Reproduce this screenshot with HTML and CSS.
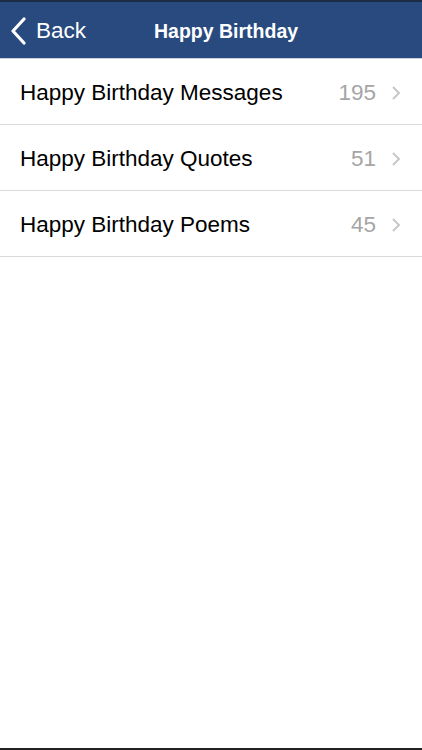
FILE: index.html
```html
<!DOCTYPE html>
<html>
<head>
<meta charset="utf-8">
<link rel="stylesheet" href="styles.css">
</head>
<body>
<div class="screen">
  <header class="navbar">
    <div class="back">
      <svg class="back-chev" width="18" height="28" viewBox="0 0 18 28"><path d="M14 2 L3 14 L14 26" fill="none" stroke="#fff" stroke-width="3.2" stroke-linecap="round" stroke-linejoin="round"/></svg>
      <span class="back-label">Back</span>
    </div>
    <div class="title">Happy Birthday</div>
  </header>
  <ul class="list">
    <li class="row"><span class="label">Happy Birthday Messages</span><span class="count">195</span><svg class="chev" width="10" height="16" viewBox="0 0 10 16"><path d="M2 2 L8 8 L2 14" fill="none" stroke="#c7c7cc" stroke-width="2"/></svg></li>
    <li class="row"><span class="label">Happy Birthday Quotes</span><span class="count">51</span><svg class="chev" width="10" height="16" viewBox="0 0 10 16"><path d="M2 2 L8 8 L2 14" fill="none" stroke="#c7c7cc" stroke-width="2"/></svg></li>
    <li class="row"><span class="label">Happy Birthday Poems</span><span class="count">45</span><svg class="chev" width="10" height="16" viewBox="0 0 10 16"><path d="M2 2 L8 8 L2 14" fill="none" stroke="#c7c7cc" stroke-width="2"/></svg></li>
  </ul>
  <div class="filler"></div>
</div>
</body>
</html>
```
FILE: styles.css
```css
html, body { margin: 0; padding: 0; }
body { font-family: "Liberation Sans", Arial, sans-serif; background: #fff; }
.screen { width: 422px; height: 750px; display: flex; flex-direction: column; border-top: 2px solid #1c2c46; border-bottom: 2px solid #222; box-sizing: border-box; }
.navbar { height: 56px; background: #284a7e; border-bottom: 1px solid #c8d0dc; position: relative; display: flex; align-items: center; flex-shrink: 0; box-sizing: content-box; }
.back { display: flex; align-items: center; padding-left: 10px; padding-top: 2px; color: #fff; }
.back-chev { display: block; }
.back-label { font-size: 22.5px; margin-left: 8px; }
.title { position: absolute; left: 154px; top: 1px; height: 56px; display: flex; align-items: center; color: #fff; font-weight: bold; font-size: 19.5px; }
.list { list-style: none; margin: 0; padding: 0; }
.row { height: 65px; border-bottom: 1px solid #d9d9d9; display: flex; align-items: center; padding: 2px 21px 0 20px; box-sizing: border-box; height: 66px; }
.label { flex: 1; font-size: 22.5px; color: #000; }
.count { font-size: 22.5px; color: #a5a5a5; margin-right: 15px; }
.chev { display: block; }
.filler { flex: 1; }
```
